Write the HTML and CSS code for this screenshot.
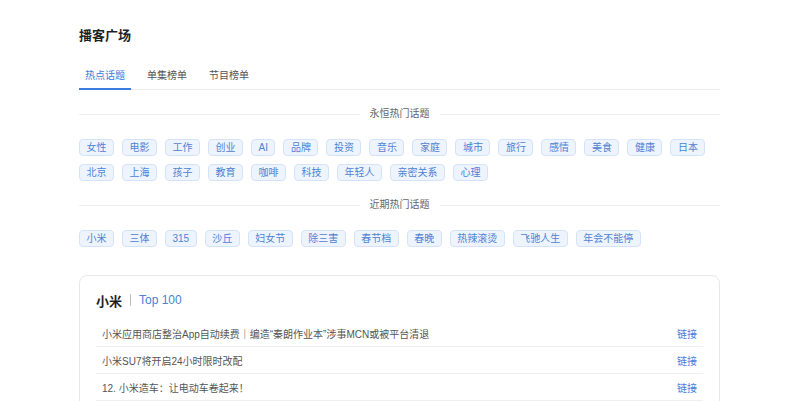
FILE: index.html
```html
<!DOCTYPE html>
<html lang="zh-CN">
<head>
<meta charset="utf-8">
<title>播客广场</title>
<link rel="stylesheet" href="styles.css">
</head>
<body>
<div class="page">
  <h1 class="title">播客广场</h1>
  <div class="tabs">
    <div class="tab active">热点话题</div>
    <div class="tab">单集榜单</div>
    <div class="tab">节目榜单</div>
  </div>

  <div class="divider"><span class="line"></span><span class="divider-text">永恒热门话题</span><span class="line"></span></div>
  <div class="tags">
    <span class="tag">女性</span><span class="tag">电影</span><span class="tag">工作</span><span class="tag">创业</span><span class="tag">AI</span><span class="tag">品牌</span><span class="tag">投资</span><span class="tag">音乐</span><span class="tag">家庭</span><span class="tag">城市</span><span class="tag">旅行</span><span class="tag">感情</span><span class="tag">美食</span><span class="tag">健康</span><span class="tag">日本</span>
    <span class="tag">北京</span><span class="tag">上海</span><span class="tag">孩子</span><span class="tag">教育</span><span class="tag">咖啡</span><span class="tag">科技</span><span class="tag">年轻人</span><span class="tag">亲密关系</span><span class="tag">心理</span>
  </div>

  <div class="divider"><span class="line"></span><span class="divider-text">近期热门话题</span><span class="line"></span></div>
  <div class="tags">
    <span class="tag">小米</span><span class="tag">三体</span><span class="tag">315</span><span class="tag">沙丘</span><span class="tag">妇女节</span><span class="tag">除三害</span><span class="tag">春节档</span><span class="tag">春晚</span><span class="tag">热辣滚烫</span><span class="tag">飞驰人生</span><span class="tag">年会不能停</span>
  </div>

  <div class="card">
    <div class="card-title"><span class="card-name">小米</span><span class="sep"></span><span class="card-sub">Top 100</span></div>
    <div class="row"><span class="row-text">小米应用商店整治App自动续费｜编造“秦朗作业本”涉事MCN或被平台清退</span><a class="row-link">链接</a></div>
    <div class="row"><span class="row-text">小米SU7将开启24小时限时改配</span><a class="row-link">链接</a></div>
    <div class="row"><span class="row-text">12. 小米造车：让电动车卷起来！</span><a class="row-link">链接</a></div>
  </div>
</div>
</body>
</html>
```

FILE: styles.css
```css
* { box-sizing: border-box; }
html, body { margin: 0; padding: 0; background: #fff; }
body {
  font-family: "Liberation Sans", "Noto Sans CJK SC", sans-serif;
  color: #333;
}
.page {
  width: 641px;
  margin-left: 79px;
  padding-top: 26px;
}
.title {
  margin: 0;
  font-size: 13px;
  line-height: 20px;
  font-weight: 700;
  color: #1f1f1f;
}
.tabs {
  display: flex;
  gap: 10px;
  margin-top: 17px;
  border-bottom: 1px solid #e9ebef;
}
.tab {
  padding: 1px 6px 0;
  font-size: 10px;
  line-height: 24px;
  color: #555;
  border-bottom: 2px solid transparent;
  margin-bottom: -1px;
}
.tab.active {
  color: #3d7be0;
  border-bottom-color: #3d7be0;
}
.divider {
  display: flex;
  align-items: center;
  gap: 10px;
  margin-top: 17px;
}
.divider .line {
  flex: 1;
  height: 1px;
  background: #eceef2;
}
.divider-text {
  font-size: 10px;
  line-height: 14px;
  color: #666;
}
.tags {
  display: flex;
  flex-wrap: wrap;
  gap: 8px 8px;
  margin-top: 18px;
}
.tag {
  display: inline-block;
  padding: 0 6.5px;
  font-size: 10px;
  line-height: 15px;
  color: #4f82d4;
  background: #eef4fd;
  border: 1px solid #d5e3f8;
  border-radius: 4px;
}
.card {
  margin-top: 28px;
  border: 1px solid #e6e8ec;
  border-radius: 8px;
  padding: 14px 16px 16px;
}
.card-title {
  display: flex;
  align-items: center;
  height: 20px;
  margin-bottom: 10px;
}
.card-name {
  font-size: 13px;
  font-weight: 700;
  color: #1f1f1f;
}
.sep {
  width: 1px;
  height: 12px;
  background: #bbb;
  margin: 0 8px;
}
.card-sub {
  font-size: 12px;
  color: #4a7fd4;
}
.row {
  display: flex;
  justify-content: space-between;
  align-items: center;
  height: 27px;
  padding: 0 6px;
  border-bottom: 1px solid #eceef2;
  font-size: 10px;
}
.row-text { color: #555; }
.row-link { color: #3d7be0; text-decoration: none; }
```
